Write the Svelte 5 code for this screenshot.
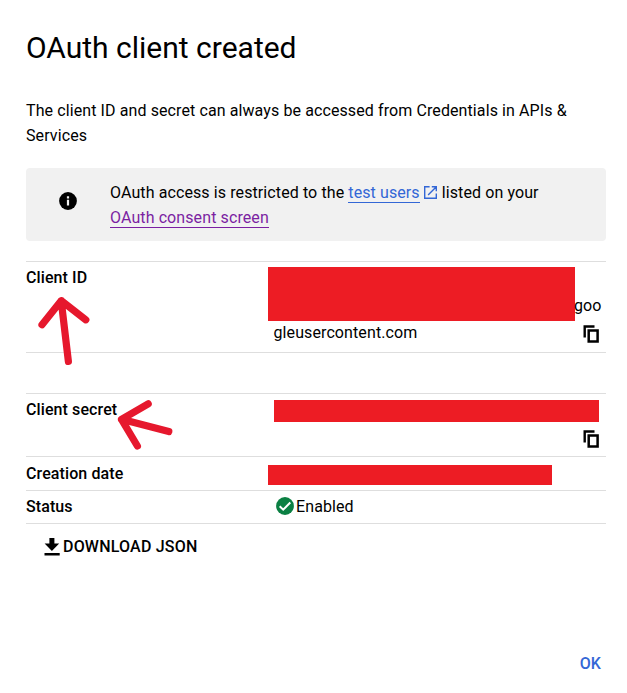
{#snippet copyIcon()}
  <button class="copy" aria-label="Copy to clipboard">
    <svg width="16" height="18" viewBox="0 0 16 18">
      <path d="M1.7 12.5V1.5H11.5" fill="none" stroke="#000" stroke-width="2.4" />
      <path d="M5.7 5.4h8.9v11.2H5.7z" fill="none" stroke="#000" stroke-width="2.5" />
    </svg>
  </button>
{/snippet}

<main class="dialog">
  <h1>OAuth client created</h1>
  <p class="intro">The client ID and secret can always be accessed from Credentials in APIs &amp; Services</p>

  <section class="notice">
    <svg class="info" width="18" height="18" viewBox="0 0 18 18">
      <circle cx="9" cy="9" r="8.9" fill="#000" />
      <path d="M7.9 4.2h2.2v2.2H7.9zM7.9 7.8h2.2v5.8H7.9z" fill="#f1f1f1" />
    </svg>
    <p>
      OAuth access is restricted to the <a class="link" href="#users">test users</a><svg class="external" width="13" height="13" viewBox="0 0 13 13" fill="none" stroke="#3367d6" stroke-width="1.4"><path d="M5.6.7H.7v11.6h11.6V7.4M7.8.7h4.5v4.5M12.1.9 4.1 8.9" /></svg>listed on your <a class="link visited" href="#consent">OAuth consent screen</a>
    </p>
  </section>

  <dl>
    <div class="row id">
      <dt>Client ID</dt>
      <dd>
        <div class="id-line"><span class="redacted id-mask"></span><span class="tail">goo</span></div>
        <div class="id-end"><span>gleusercontent.com</span>{@render copyIcon()}</div>
      </dd>
    </div>
    <div class="row secret">
      <dt>Client secret</dt>
      <dd>
        <span class="redacted secret-mask"></span>
        {@render copyIcon()}
      </dd>
    </div>
    <div class="row date">
      <dt>Creation date</dt>
      <dd><span class="redacted date-mask"></span></dd>
    </div>
    <div class="row status">
      <dt>Status</dt>
      <dd>
        <svg width="18" height="18" viewBox="0 0 18 18">
          <circle cx="9" cy="9" r="8.9" fill="#0b8043" />
          <path d="m3.7 9.2 3.5 3.5 7.1-7.2" fill="none" stroke="#fff" stroke-width="2" />
        </svg>
        <span>Enabled</span>
      </dd>
    </div>
  </dl>

  <button class="download">
    <svg width="16" height="18" viewBox="0 0 16 18">
      <path d="M5.4 0h5v5.4h4.8L7.9 13 .6 5.4h4.8zM.5 15h15.2v2.4H.5z" fill="#000" />
    </svg>
    <span>DOWNLOAD JSON</span>
  </button>

  <footer><button class="ok">OK</button></footer>

  <svg class="arrows" width="627" height="693" viewBox="0 0 627 693">
    <path d="M42 324.7 61.2 300.7 85.8 319.8M61.2 300.7 68.4 361.5" />
    <path d="M148.2 403.8 121.5 419.3 137.4 446M121.5 419.3 168.8 431.5" />
  </svg>
</main>

<style>
  :global(body) {
    margin: 0;
    background: #fff;
  }
  .dialog {
    position: relative;
    box-sizing: border-box;
    width: 627px;
    height: 693px;
    padding: 28px 21px 0 26px;
    overflow: hidden;
    color: #000;
    font: 16px/25px Roboto, sans-serif;
    letter-spacing: 0.1px;
    display: flex;
    flex-direction: column;
  }
  h1 {
    margin: 0;
    font-size: 30px;
    font-weight: 400;
    line-height: 40px;
    letter-spacing: 0;
  }
  p {
    margin: 0;
  }
  .intro {
    margin-top: 30px;
  }
  .notice {
    margin-top: 20px;
    height: 73px;
    box-sizing: border-box;
    border-radius: 4px;
    background: #f1f1f1;
    display: flex;
    padding: 12px 50px 0 33px;
  }
  .info {
    flex: none;
    margin: 12px 33px 0 0;
  }
  .link {
    display: inline-block;
    line-height: 18px;
    color: #3367d6;
    text-decoration: none;
    border-bottom: 1px solid #3367d6;
  }
  .visited {
    color: #7b1fa2;
    border-color: #7b1fa2;
  }
  .external {
    margin: 0 5px 0 4px;
    vertical-align: -1px;
  }
  dl {
    margin: 20px 0 0;
  }
  .row {
    box-sizing: border-box;
    display: flex;
    border-top: 1px solid #dedede;
  }
  dt {
    width: 242px;
    flex: none;
    font-weight: 500;
  }
  dd {
    margin: 0;
    flex: 1;
    display: flex;
  }
  .redacted {
    display: block;
    flex: none;
    background: #ed1c24;
  }
  .id {
    height: 92px;
    padding-top: 3px;
    border-bottom: 1px solid #dedede;
  }
  .id dd {
    flex-direction: column;
    padding-top: 2px;
  }
  .id-line {
    display: flex;
    align-items: flex-end;
  }
  .id-mask {
    width: 307px;
    height: 54px;
  }
  .tail {
    padding-bottom: 3px;
    margin-left: -1px;
  }
  .id-end {
    display: flex;
    justify-content: space-between;
    line-height: 23px;
    padding: 0 7px 0 5.5px;
  }
  .copy,
  .download,
  .ok {
    border: 0;
    padding: 0;
    background: none;
    font: inherit;
    letter-spacing: inherit;
  }
  .copy {
    display: flex;
    align-self: flex-start;
  }
  .id .copy {
    margin-top: 4px;
  }
  .secret {
    height: 63px;
    margin-top: 40px;
    padding-top: 3px;
  }
  .secret dd {
    flex-direction: column;
    padding: 3px 7px 0 6px;
  }
  .secret-mask {
    width: 325px;
    height: 22px;
  }
  .secret .copy {
    align-self: flex-end;
    margin-top: 8px;
  }
  .date {
    height: 34px;
    padding-top: 4px;
  }
  .date-mask {
    margin-top: 4px;
    width: 284px;
    height: 20px;
  }
  .status {
    height: 34px;
    padding-top: 3px;
    border-bottom: 1px solid #dedede;
  }
  .status svg {
    margin: 3px 2px 0 8px;
  }
  .download {
    display: flex;
    align-items: center;
    gap: 3px;
    margin: 10px 0 0 18px;
    font-weight: 500;
    letter-spacing: 0.2px;
  }
  .ok {
    color: #3367d6;
    font-weight: 500;
  }
  footer {
    display: flex;
    justify-content: flex-end;
    margin-top: 92px;
    padding-right: 5px;
  }
  .arrows {
    position: absolute;
    left: 0;
    top: 0;
    pointer-events: none;
    fill: none;
    stroke: #e6182d;
    stroke-width: 7.2;
    stroke-linecap: round;
    stroke-linejoin: round;
  }
</style>
